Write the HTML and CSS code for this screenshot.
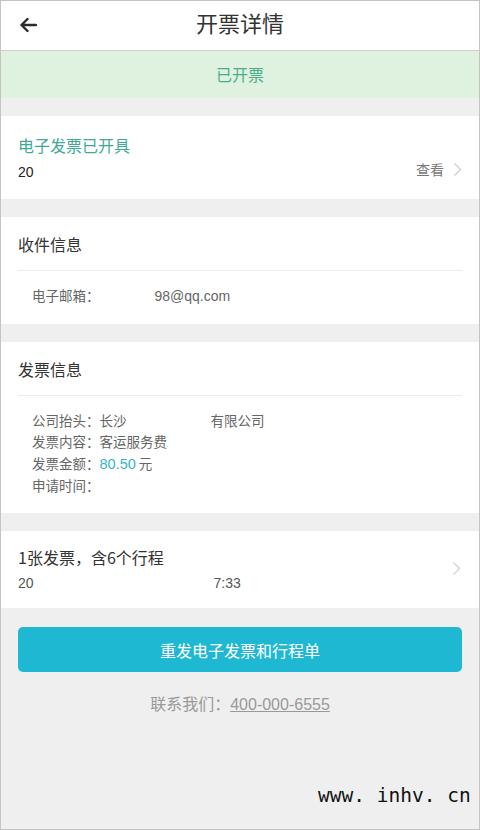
FILE: index.html
```html
<!DOCTYPE html>
<html lang="zh-CN">
<head>
<meta charset="utf-8">
<title>开票详情</title>
<link rel="stylesheet" href="styles.css">
</head>
<body>
<div class="screen">
  <header class="topbar">
    <span class="back">
      <svg width="18" height="16" viewBox="0 0 18 16"><path d="M17 8H2.5M8.5 2L2.5 8L8.5 14" fill="none" stroke="#2b2b2b" stroke-width="2.4" stroke-linecap="round" stroke-linejoin="round"/></svg>
    </span>
    <h1 class="title">开票详情</h1>
  </header>

  <div class="status">已开票</div>

  <section class="card card-issued">
    <div class="issued-title">电子发票已开具</div>
    <div class="issued-row">
      <span class="num">20</span>
      <span class="view">查看<svg class="chev" width="9" height="15" viewBox="0 0 9 15"><path d="M1.5 1.5L7.5 7.5L1.5 13.5" fill="none" stroke="#cfcfcf" stroke-width="1.4"/></svg></span>
    </div>
  </section>

  <section class="card">
    <div class="card-head">收件信息</div>
    <div class="divider"></div>
    <div class="info">
      <div class="line"><span class="label">电子邮箱：</span><span class="email">98@qq.com</span></div>
    </div>
  </section>

  <section class="card">
    <div class="card-head">发票信息</div>
    <div class="divider"></div>
    <div class="info">
      <div class="line"><span class="label">公司抬头：</span><span>长沙</span><span class="company-tail">有限公司</span></div>
      <div class="line"><span class="label">发票内容：</span><span>客运服务费</span></div>
      <div class="line"><span class="label">发票金额：</span><span class="amount">80.50</span><span> 元</span></div>
      <div class="line"><span class="label">申请时间：</span></div>
    </div>
  </section>

  <section class="card card-trip">
    <div class="trip-text">
      <div class="trip-title">1张发票，含6个行程</div>
      <div class="trip-sub"><span>20</span><span class="time">7:33</span></div>
    </div>
    <svg class="chev" width="9" height="15" viewBox="0 0 9 15"><path d="M1.5 1.5L7.5 7.5L1.5 13.5" fill="none" stroke="#d2d2d2" stroke-width="1.4"/></svg>
  </section>

  <button class="resend" type="button">重发电子发票和行程单</button>

  <p class="contact">联系我们：<span class="phone">400-000-6555</span></p>

  <div class="watermark">www. inhv. cn</div>
</div>
</body>
</html>
```

FILE: styles.css
```css
* { box-sizing: border-box; }

html, body {
  margin: 0;
  padding: 0;
}

body {
  width: 480px;
  height: 830px;
  font-family: "Noto Sans CJK SC", "Noto Sans", sans-serif;
  color: #333;
}

.screen {
  position: relative;
  width: 480px;
  height: 830px;
  border: 1px solid #c4c4c4;
  background: #efefef;
  display: flex;
  flex-direction: column;
  overflow: hidden;
}

.topbar {
  height: 50px;
  flex: none;
  background: #fff;
  border-bottom: 1px solid #cfcfcf;
  display: flex;
  align-items: center;
  justify-content: center;
  position: relative;
}

.back {
  position: absolute;
  left: 18px;
  top: 16px;
  display: flex;
}

.title {
  margin: 0 0 7px;
  font-size: 22px;
  font-weight: 400;
  line-height: 28px;
  color: #333;
}

.status {
  height: 47px;
  flex: none;
  background: #dff2e0;
  color: #4aae8e;
  font-size: 16px;
  line-height: 47px;
  text-align: center;
}

.card {
  background: #fff;
  margin-top: 18px;
  flex: none;
}

.card-issued {
  height: 83px;
  padding: 17px 17px 0 17px;
}

.issued-title {
  font-size: 16px;
  line-height: 24px;
  color: #40ab92;
}

.issued-row {
  margin-top: 5px;
  display: flex;
  justify-content: space-between;
  align-items: center;
  height: 20px;
}

.num {
  font-size: 14px;
  line-height: 20px;
  color: #222;
  font-family: "Liberation Sans", "Noto Sans CJK SC", sans-serif;
}

.view {
  display: flex;
  align-items: center;
  gap: 9px;
  font-size: 14px;
  color: #777;
  margin-top: -6px;
  margin-right: 0;
}

.card-head {
  padding: 15px 17px 0;
  font-size: 16px;
  line-height: 24px;
  height: 53px;
  color: #333;
}

.card + .card { margin-top: 18px; }

.divider {
  height: 1px;
  margin: 0 17px;
  background: #ececec;
}

.info {
  padding: 14px 31px 17px;
  font-size: 13.5px;
  line-height: 21.2px;
  color: #666;
}

.line {
  white-space: nowrap;
}

.label { color: #666; }

.email {
  margin-left: 55px;
  font-family: "Liberation Sans", "Noto Sans CJK SC", sans-serif;
  font-size: 14px;
}

.company-tail { margin-left: 84px; }

.amount {
  color: #36b6c8;
  font-family: "Liberation Sans", sans-serif;
  font-size: 14.5px;
}

.card-trip {
  margin-top: 19px;
  height: 77px;
  padding: 14px 17px 0 17px;
  display: flex;
  justify-content: space-between;
  align-items: flex-start;
}

.card-trip .chev { margin-top: 16px; margin-right: 1px; }

.trip-title {
  font-size: 16px;
  line-height: 24px;
  color: #333;
}

.trip-sub {
  margin-top: 4px;
  font-size: 14px;
  line-height: 20px;
  color: #555;
  font-family: "Liberation Sans", "Noto Sans CJK SC", sans-serif;
  display: flex;
}

.time { margin-left: 180px; }

.resend {
  flex: none;
  margin: 19px 17px 0;
  height: 45px;
  border: none;
  border-radius: 5px;
  background: #1fb8d3;
  color: #fff;
  font-family: "Noto Sans CJK SC", sans-serif;
  font-size: 16px;
  padding: 0;
}

.contact {
  margin: 20px 0 0;
  text-align: center;
  font-size: 16px;
  line-height: 22px;
  color: #999;
}

.phone {
  text-decoration: underline;
  font-family: "Liberation Sans", sans-serif;
  font-size: 16px;
}

.watermark {
  position: absolute;
  left: 317px;
  top: 781px;
  font-family: "DejaVu Sans Mono", monospace;
  font-size: 19.5px;
  line-height: 28px;
  color: #111;
  white-space: pre;
}
```
